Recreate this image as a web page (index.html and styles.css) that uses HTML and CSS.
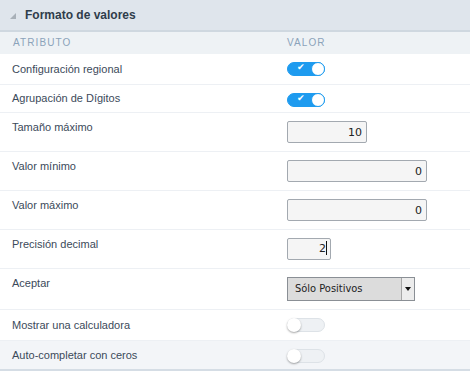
FILE: index.html
```html
<!DOCTYPE html>
<html lang="es">
<head>
    <meta charset="UTF-8">
    <title>Formato de valores</title>
    <link rel="stylesheet" href="styles.css">
</head>
<body>
    <div class="panel">
        <div class="panel-title">
            <span class="caret"></span>
            Formato de valores
        </div>
        <div class="grid">
            <div class="col-head">ATRIBUTO</div>
            <div class="col-head">VALOR</div>

            <div class="row toggle-row">
                <div class="label">Configuración regional</div>
                <div class="value"><span class="switch on"><span class="check">✔</span><span class="knob"></span></span></div>
            </div>
            <div class="row toggle-row short">
                <div class="label">Agrupación de Dígitos</div>
                <div class="value"><span class="switch on"><span class="check">✔</span><span class="knob"></span></span></div>
            </div>
            <div class="row">
                <div class="label">Tamaño máximo</div>
                <div class="value"><input class="field w-80" type="text" value="10"></div>
            </div>
            <div class="row">
                <div class="label">Valor mínimo</div>
                <div class="value"><input class="field w-140" type="text" value="0"></div>
            </div>
            <div class="row">
                <div class="label">Valor máximo</div>
                <div class="value"><input class="field w-140" type="text" value="0"></div>
            </div>
            <div class="row">
                <div class="label">Precisión decimal</div>
                <div class="value"><span class="field w-44 caret-field">2</span></div>
            </div>
            <div class="row">
                <div class="label">Aceptar</div>
                <div class="value">
                    <div class="select">
                        <span class="select-text">Sólo Positivos</span>
                        <span class="select-btn"><span class="arrow"></span></span>
                    </div>
                </div>
            </div>
            <div class="row toggle-row">
                <div class="label">Mostrar una calculadora</div>
                <div class="value"><span class="switch"><span class="knob"></span></span></div>
            </div>
            <div class="row toggle-row short alt">
                <div class="label">Auto-completar con ceros</div>
                <div class="value"><span class="switch"><span class="knob"></span></span></div>
            </div>
        </div>
    </div>
</body>
</html>
```

FILE: styles.css
```css
* {
    margin: 0;
    padding: 0;
    box-sizing: border-box;
}

body {
    font-family: Arial, 'Liberation Sans', sans-serif;
    background: #fff;
    color: #3b4a5a;
}

.panel {
    width: 470px;
    border-bottom: 5px solid #d5dde5;
}

.panel-title {
    height: 32px;
    background: #dfe5ec;
    border-bottom: 2px solid #cfd8e0;
    display: flex;
    align-items: center;
    padding-left: 10px;
    font-size: 12px;
    font-weight: bold;
    color: #2f3d4b;
}

.caret {
    width: 0;
    height: 0;
    border-left: 6px solid transparent;
    border-bottom: 6px solid #a8b0b8;
    margin-right: 9px;
    margin-top: 1px;
}

.grid {
    display: grid;
    grid-template-columns: 287px 1fr;
}

.col-head {
    background: #eef2f5;
    height: 22px;
    line-height: 22px;
    font-size: 10px;
    letter-spacing: 1.1px;
    color: #8ba3ba;
    padding-left: 13px;
}

.col-head + .col-head {
    padding-left: 0;
}

.row {
    display: contents;
}

.row > div {
    border-bottom: 1px solid #edf0f4;
    padding: 8px 0;
    font-size: 11px;
}

.row .label {
    padding-left: 12px;
    line-height: 13px;
}

.row .value {
    display: flex;
    align-items: flex-start;
}

.toggle-row > div {
    display: flex;
    align-items: center;
    height: 31px;
}

.toggle-row.short > div {
    height: 28px;
}

.alt > div {
    background: #f3f5f8;
    border-bottom: none;
}

.switch {
    position: relative;
    display: inline-block;
    width: 38px;
    height: 14px;
    border-radius: 7px;
    background: #eef1f4;
    border: 1px solid #dde2e7;
}

.switch.on {
    background: #1e9bef;
    border-color: #1e9bef;
}

.check {
    position: absolute;
    left: 9px;
    top: -1px;
    font-size: 9px;
    color: #fff;
}

.knob {
    position: absolute;
    top: -1px;
    left: -1px;
    width: 14px;
    height: 14px;
    border-radius: 50%;
    background: #fff;
    box-shadow: 0 1px 2px rgba(0, 0, 0, 0.35);
}

.switch.on .knob {
    left: auto;
    right: -1px;
    border: 1px solid #1e9bef;
    box-shadow: none;
}

.field {
    display: block;
    height: 22px;
    border: 1px solid #a3a9b0;
    border-radius: 2px;
    background: #f5f5f5;
    font-family: 'DejaVu Sans', sans-serif;
    font-size: 11px;
    color: #222;
    text-align: right;
    padding: 0 4px;
    line-height: 20px;
    outline: none;
}

.w-80 { width: 80px; }
.w-140 { width: 140px; }
.w-44 { width: 44px; }

.caret-field {
    padding-right: 3px;
}

.caret-field::after {
    content: "";
    display: inline-block;
    width: 1px;
    height: 14px;
    background: #111;
    vertical-align: -3px;
}

.select {
    display: flex;
    width: 128px;
    height: 24px;
    border: 1px solid #8a8f95;
    background: #dcdcdc;
}

.select-text {
    flex: 1;
    font-family: 'DejaVu Sans Condensed', 'DejaVu Sans', sans-serif;
    font-size: 11px;
    color: #222;
    line-height: 22px;
    padding-left: 7px;
}

.select-btn {
    width: 13px;
    border-left: 1px solid #a5a5a5;
    background: #ececec;
    display: flex;
    align-items: center;
    justify-content: center;
}

.arrow {
    width: 0;
    height: 0;
    border-left: 3px solid transparent;
    border-right: 3px solid transparent;
    border-top: 4px solid #111;
}
```
